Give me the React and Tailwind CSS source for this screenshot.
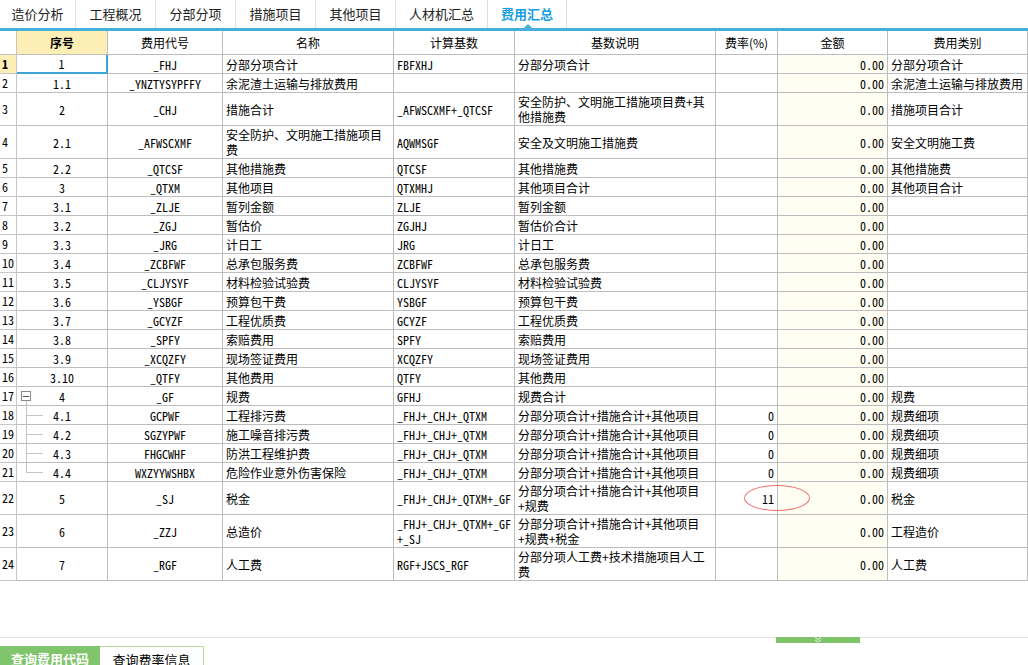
import React from 'react';

const tabs = [
  { label: '造价分析', w: 'w-[76px]' },
  { label: '工程概况', w: 'w-[80px]' },
  { label: '分部分项', w: 'w-[80px]' },
  { label: '措施项目', w: 'w-[80px]' },
  { label: '其他项目', w: 'w-[80px]' },
  { label: '人材机汇总', w: 'w-[92px]' },
  { label: '费用汇总', w: 'w-[79px]', active: true },
];

const mono = "font-['Noto_Sans_Mono_CJK_SC','Liberation_Mono',monospace]";

const cols = [
  { key: 'no', title: '序号', w: 'w-[91px]', cls: 'justify-center text-center', mono: true },
  { key: 'code', title: '费用代号', w: 'w-[115px]', cls: 'justify-center text-center', mono: true },
  { key: 'name', title: '名称', w: 'w-[171px]', cls: 'justify-start' },
  { key: 'base', title: '计算基数', w: 'w-[121px]', cls: 'justify-start', mono: true },
  { key: 'desc', title: '基数说明', w: 'w-[201px]', cls: 'justify-start' },
  { key: 'rate', title: '费率(%)', w: 'w-[62px]', cls: 'justify-end text-right', mono: true },
  { key: 'amt', title: '金额', w: 'w-[110px]', cls: 'justify-end text-right bg-[#fffef2]', mono: true },
  { key: 'cat', title: '费用类别', w: 'w-[140px]', cls: 'justify-start' },
];

const SUM3 = '_FHJ+_CHJ+_QTXM';
const DESC3 = '分部分项合计+措施合计+其他项目';

const rows = [
  { no: '1', code: '_FHJ', name: '分部分项合计', base: 'FBFXHJ', desc: '分部分项合计', cat: '分部分项合计' },
  { no: '1.1', code: '_YNZTYSYPFFY', name: '余泥渣土运输与排放费用', base: '', desc: '', cat: '余泥渣土运输与排放费用' },
  { no: '2', code: '_CHJ', name: '措施合计', base: '_AFWSCXMF+_QTCSF', desc: '安全防护、文明施工措施项目费+其\n他措施费', cat: '措施项目合计', tall: true },
  { no: '2.1', code: '_AFWSCXMF', name: '安全防护、文明施工措施项目\n费', base: 'AQWMSGF', desc: '安全及文明施工措施费', cat: '安全文明施工费', tall: true },
  { no: '2.2', code: '_QTCSF', name: '其他措施费', base: 'QTCSF', desc: '其他措施费', cat: '其他措施费' },
  { no: '3', code: '_QTXM', name: '其他项目', base: 'QTXMHJ', desc: '其他项目合计', cat: '其他项目合计' },
  { no: '3.1', code: '_ZLJE', name: '暂列金额', base: 'ZLJE', desc: '暂列金额' },
  { no: '3.2', code: '_ZGJ', name: '暂估价', base: 'ZGJHJ', desc: '暂估价合计' },
  { no: '3.3', code: '_JRG', name: '计日工', base: 'JRG', desc: '计日工' },
  { no: '3.4', code: '_ZCBFWF', name: '总承包服务费', base: 'ZCBFWF', desc: '总承包服务费' },
  { no: '3.5', code: '_CLJYSYF', name: '材料检验试验费', base: 'CLJYSYF', desc: '材料检验试验费' },
  { no: '3.6', code: '_YSBGF', name: '预算包干费', base: 'YSBGF', desc: '预算包干费' },
  { no: '3.7', code: '_GCYZF', name: '工程优质费', base: 'GCYZF', desc: '工程优质费' },
  { no: '3.8', code: '_SPFY', name: '索赔费用', base: 'SPFY', desc: '索赔费用' },
  { no: '3.9', code: '_XCQZFY', name: '现场签证费用', base: 'XCQZFY', desc: '现场签证费用' },
  { no: '3.10', code: '_QTFY', name: '其他费用', base: 'QTFY', desc: '其他费用' },
  { no: '4', code: '_GF', name: '规费', base: 'GFHJ', desc: '规费合计', cat: '规费', tree: 'root' },
  { no: '4.1', code: 'GCPWF', name: '工程排污费', base: SUM3, desc: DESC3, rate: '0', cat: '规费细项', tree: 'mid' },
  { no: '4.2', code: 'SGZYPWF', name: '施工噪音排污费', base: SUM3, desc: DESC3, rate: '0', cat: '规费细项', tree: 'mid' },
  { no: '4.3', code: 'FHGCWHF', name: '防洪工程维护费', base: SUM3, desc: DESC3, rate: '0', cat: '规费细项', tree: 'mid' },
  { no: '4.4', code: 'WXZYYWSHBX', name: '危险作业意外伤害保险', base: SUM3, desc: DESC3, rate: '0', cat: '规费细项', tree: 'last' },
  { no: '5', code: '_SJ', name: '税金', base: '_FHJ+_CHJ+_QTXM+_GF', desc: DESC3 + '\n+规费', rate: '11', cat: '税金', tall: true, mark: true },
  { no: '6', code: '_ZZJ', name: '总造价', base: '_FHJ+_CHJ+_QTXM+_GF\n+_SJ', desc: DESC3 + '\n+规费+税金', cat: '工程造价', tall: true },
  { no: '7', code: '_RGF', name: '人工费', base: 'RGF+JSCS_RGF', desc: '分部分项人工费+技术措施项目人工\n费', cat: '人工费', tall: true },
];

const TreeMarks = ({ type }) => {
  if (type === 'root') {
    return (
      <>
        <span className="absolute left-[4px] top-[4px] w-[10px] h-[10px] border border-[#8a8a8a] bg-white flex items-center justify-center">
          <span className="w-[6px] h-px bg-[#555]" />
        </span>
        <span className="absolute left-[9px] top-[14px] bottom-0 w-px bg-[#c4c4c4]" />
      </>
    );
  }
  return (
    <>
      <span className={`absolute left-[9px] top-0 w-px bg-[#c4c4c4] ${type === 'last' ? 'h-[9px]' : 'h-full'}`} />
      <span className="absolute left-[9px] top-[9px] w-[17px] h-px bg-[#c4c4c4]" />
    </>
  );
};

const Row = ({ r, i }) => {
  const h = r.tall ? 'h-[33px]' : 'h-[19px]';
  const first = i === 0;
  return (
    <div className={`flex ${h}`}>
      <div className={`w-[17px] shrink-0 flex items-center pl-[2px] text-[12px] border-r border-b border-[#c6c6c6] ${mono} ${first ? 'bg-[#fdeeb6] font-bold' : ''}`}>
        {i + 1}
      </div>
      {cols.map((c) => {
        const sel = first && c.key === 'no';
        return (
          <div
            key={c.key}
            className={`${c.w} shrink-0 relative flex items-center px-[3px] text-[12px] leading-[15px] whitespace-pre-line ${c.cls} ${c.mono ? mono : ''} ${
              sel ? 'border-r-2 border-b-2 border-[#3ea3d6]' : 'border-r border-b border-[#bdbdbd]'
            }`}
          >
            {c.key === 'no' && r.tree && <TreeMarks type={r.tree} />}
            {c.key === 'amt' ? '0.00' : r[c.key] || ''}
            {c.key === 'rate' && r.mark && (
              <span className="absolute z-10 left-[28px] top-[3px] w-[66px] h-[26px] rounded-[50%] border border-[#ee6f6f] pointer-events-none" />
            )}
          </div>
        );
      })}
    </div>
  );
};

export default function App() {
  return (
    <div className="w-[1028px] h-[665px] overflow-hidden bg-white text-black flex flex-col font-['Noto_Sans_CJK_SC',sans-serif]">
      <div className="flex h-[28px] shrink-0">
        {tabs.map((t) => (
          <div
            key={t.label}
            className={`${t.w} relative flex items-center justify-center border-r border-[#dedede] text-[13px] ${
              t.active ? 'text-[#16a0e0] font-bold' : 'text-[#222]'
            }`}
          >
            {t.label}
            {t.active && (
              <span className="absolute bottom-0 left-[36px] w-0 h-0 border-x-[4px] border-x-transparent border-b-[4px] border-b-[#45b0da]" />
            )}
          </div>
        ))}
      </div>
      <div className="h-[3px] bg-[#45b0da] shrink-0" />

      <div className="h-[606px] shrink-0 overflow-hidden">
        <div className="flex h-[24px]">
          <div className="w-[17px] shrink-0 border-r border-b border-[#c6c6c6]" />
          {cols.map((c) => (
            <div
              key={c.key}
              className={`${c.w} shrink-0 flex items-center justify-center text-[12px] border-r border-b border-[#bdbdbd] ${
                c.key === 'no' ? 'bg-[#fdeeb6] font-bold' : ''
              }`}
            >
              {c.title}
            </div>
          ))}
        </div>
        {rows.map((r, i) => (
          <Row key={i} r={r} i={i} />
        ))}
      </div>

      <div className="relative h-px bg-[#e0e0e0] shrink-0">
        <div className="absolute left-[776px] top-0 w-[84px] h-[6px] bg-[#80c46b] flex justify-center">
          <svg width="8" height="6" viewBox="0 0 8 6" className="block">
            <polyline points="1,0.5 4,2.5 7,0.5" fill="none" stroke="#dff2d6" strokeWidth="1" />
            <polyline points="1,3 4,5 7,3" fill="none" stroke="#dff2d6" strokeWidth="1" />
          </svg>
        </div>
      </div>
      <div className="h-[8px] shrink-0" />
      <div className="flex h-[26px] shrink-0">
        <div className="w-[100px] flex items-center justify-center bg-[#80c46b] text-white font-bold text-[13px]">
          查询费用代码
        </div>
        <div className="w-[104px] flex items-center justify-center border-t border-r border-[#b6dea0] text-[13px] text-black">
          查询费率信息
        </div>
      </div>
    </div>
  );
}
